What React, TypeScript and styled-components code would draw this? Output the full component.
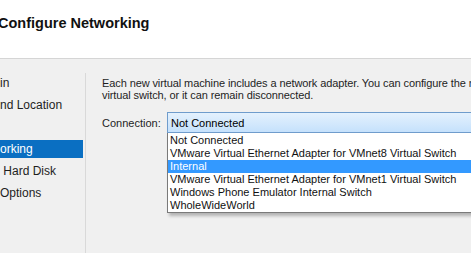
import React from 'react'
import styled, { createGlobalStyle } from 'styled-components'

const GlobalStyle = createGlobalStyle`
  html, body {
    margin: 0;
    padding: 0;
    background: #f0f0f0;
  }
  body {
    font-family: 'Liberation Sans', Arial, sans-serif;
    font-size: 11px;
    color: #000;
  }
`

const Window = styled.div`
  width: 471px;
  height: 253px;
  overflow: hidden;
  display: flex;
  flex-direction: column;
  background: #f0f0f0;
`

const Header = styled.header`
  height: 58px;
  flex: none;
  background: #fff;
  border-bottom: 1px solid #d5d5d5;
  box-sizing: content-box;
`

const Title = styled.h1`
  margin: 0;
  padding: 14px 0 0;
  margin-left: -2px;
  font-size: 14.5px;
  font-weight: bold;
  color: #111;
  line-height: 18px;
`

const Body = styled.div`
  flex: 1;
  display: flex;
  padding-top: 14px;
`

const Nav = styled.nav`
  width: 83px;
  flex: none;
  border-right: 1px solid #d9d9d9;
  display: flex;
  flex-direction: column;
  gap: 4px;
  padding-top: 1px;
  padding-right: 2px;
`

const NavItem = styled.div<{ $active?: boolean }>`
  height: 18px;
  line-height: 18px;
  font-size: 12px;
  white-space: pre;
  color: ${(p) => (p.$active ? '#fff' : '#1e1e1e')};
  background: ${(p) => (p.$active ? '#0a6fc2' : 'transparent')};
`

const Content = styled.section`
  flex: 1;
  padding: 4px 0 0 16px;
  display: flex;
  flex-direction: column;
  gap: 11px;
`

const Intro = styled.p`
  margin: 0;
  line-height: 12px;
  white-space: nowrap;
  letter-spacing: -0.1px;
  color: #1e1e1e;
`

const ConnectionRow = styled.div`
  display: flex;
  align-items: center;
`

const Label = styled.span`
  width: 65px;
  flex: none;
  color: #1e1e1e;
`

const Combo = styled.div`
  position: relative;
  width: 320px;
  height: 19px;
  border: 1px solid #6f9ccc;
  background: linear-gradient(#e4f1fd, #c5e1fc);
  display: flex;
  align-items: center;
  padding-left: 3px;
  box-sizing: content-box;
`

const DropList = styled.ul`
  position: absolute;
  left: -1px;
  top: 20px;
  width: 320px;
  margin: 0;
  padding: 1px 0 0;
  list-style: none;
  background: #fff;
  border: 1px solid #7a7a7a;
  border-top: 0;
  box-shadow: 2px 3px 3px rgba(0, 0, 0, 0.25);
`

const DropItem = styled.li<{ $selected?: boolean }>`
  height: 13px;
  line-height: 13px;
  padding-left: 2px;
  white-space: nowrap;
  color: ${(p) => (p.$selected ? '#fff' : '#111')};
  background: ${(p) => (p.$selected ? '#3399ff' : 'transparent')};
`

const navItems = ['in', 'nd Location', '', 'orking', ' Hard Disk', 'Options']

const options = [
  'Not Connected',
  'VMware Virtual Ethernet Adapter for VMnet8 Virtual Switch',
  'Internal',
  'VMware Virtual Ethernet Adapter for VMnet1 Virtual Switch',
  'Windows Phone Emulator Internal Switch',
  'WholeWideWorld',
]

export default function App() {
  return (
    <Window>
      <GlobalStyle />
      <Header>
        <Title>Configure Networking</Title>
      </Header>
      <Body>
        <Nav>
          {navItems.map((item, i) => (
            <NavItem key={i} $active={i === 3}>
              {item}
            </NavItem>
          ))}
        </Nav>
        <Content>
          <Intro>
            Each new virtual machine includes a network adapter. You can configure the network adapter to use a
            <br />
            virtual switch, or it can remain disconnected.
          </Intro>
          <ConnectionRow>
            <Label>Connection:</Label>
            <Combo>
              Not Connected
              <DropList>
                {options.map((o) => (
                  <DropItem key={o} $selected={o === 'Internal'}>
                    {o}
                  </DropItem>
                ))}
              </DropList>
            </Combo>
          </ConnectionRow>
        </Content>
      </Body>
    </Window>
  )
}
